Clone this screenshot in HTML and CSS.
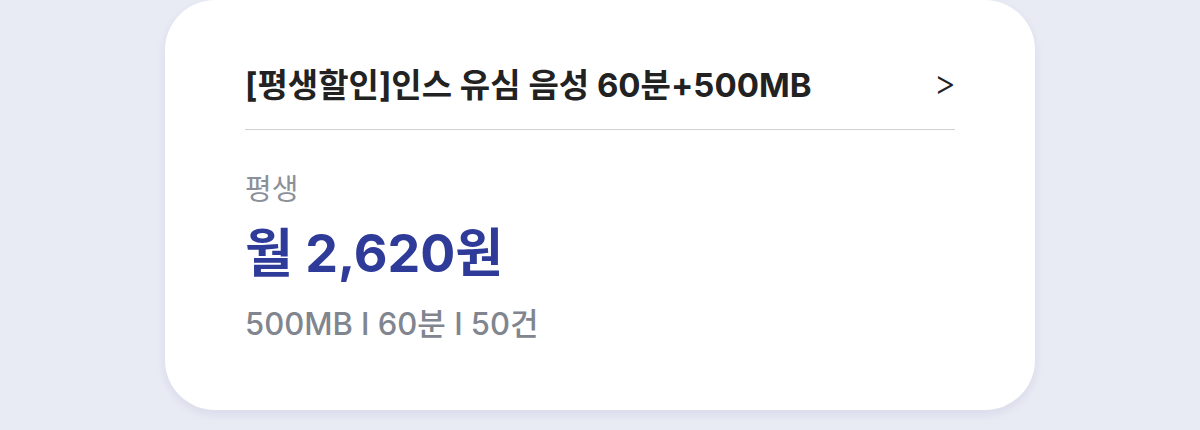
FILE: index.html
```html
<!DOCTYPE html>
<html lang="ko">
<head>
    <meta charset="utf-8">
    <title>요금제</title>
    <link rel="stylesheet" href="styles.css">
</head>
<body>
    <div class="card">
        <div class="card-head">
            <h2 class="plan-name">[평생할인]인스 유심 음성 60분+500MB</h2>
            <span class="arrow">&gt;</span>
        </div>
        <p class="period">평생</p>
        <p class="price">월 2,620원</p>
        <p class="specs">500MB I 60분 I 50건</p>
    </div>
</body>
</html>
```

FILE: styles.css
```css
* {
    margin: 0;
    padding: 0;
    box-sizing: border-box;
}

body {
    font-family: Inter, "Noto Sans CJK KR", sans-serif;
    background-color: #e8eaf4;
    height: 430px;
    overflow: hidden;
}

.card {
    width: 870px;
    height: 410px;
    margin-left: 165px;
    padding: 0 80px;
    background-color: #ffffff;
    border-radius: 50px;
    box-shadow: 0 4px 10px rgba(40, 50, 120, 0.08);
}

.card-head {
    display: flex;
    justify-content: space-between;
    align-items: center;
    height: 130px;
    padding-top: 36px;
    border-bottom: 1px solid #cfd0d4;
}

.plan-name {
    font-size: 33px;
    font-weight: 700;
    color: #222222;
}

.arrow {
    font-size: 34px;
    font-weight: 300;
    color: #222222;
    margin-right: -1px;
}

.period {
    margin-top: 36px;
    font-size: 29px;
    color: #8c9099;
}

.price {
    margin-top: 4px;
    font-size: 52px;
    font-weight: 700;
    color: #2f3b99;
}

.specs {
    margin-top: 12px;
    font-size: 31px;
    font-weight: 500;
    color: #80858f;
}
```
